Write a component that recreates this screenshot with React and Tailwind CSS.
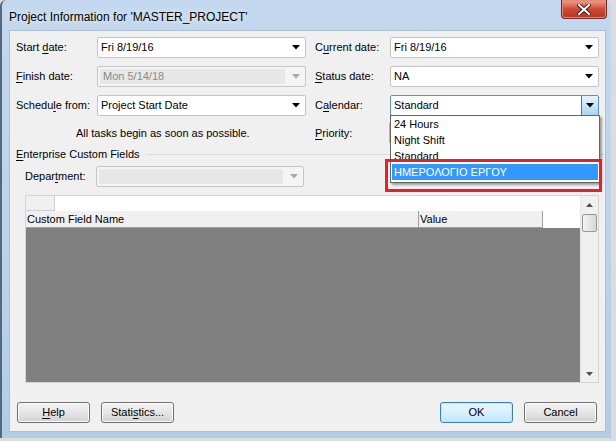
import clsx from "clsx";

const font = { fontFamily: '"Liberation Sans", Arial, sans-serif' };

function U({ children }) {
  return <span className="underline underline-offset-[2px]">{children}</span>;
}

function Arrow({ color = "#000" }) {
  return (
    <svg width="8" height="5" viewBox="0 0 8 5">
      <path d="M0 0h8L4 4.5z" fill={color} />
    </svg>
  );
}

function Combo({ value, disabled, focused, width = "w-[209px]" }) {
  return (
    <div
      className={clsx(
        "flex h-[21px] items-stretch rounded-[2px] border",
        width,
        disabled
          ? "border-[#c5c5c5] bg-[#f4f4f4]"
          : focused
          ? "border-[#5b8fbd] bg-white"
          : "border-[#c4c4c4] bg-white"
      )}
    >
      <div
        className={clsx(
          "flex flex-1 items-center px-[3px]",
          disabled && "m-[2px] bg-[#e7e7e7] text-[#8a8a8a]"
        )}
      >
        {value}
      </div>
      {focused ? (
        <div className="flex w-[17px] items-center justify-center border-l border-[#3c7fb1] bg-gradient-to-b from-[#e6f4fc] via-[#c9e6f7] to-[#a7d4f1]">
          <Arrow />
        </div>
      ) : (
        <div className="flex w-[18px] items-center justify-center">
          <Arrow color={disabled ? "#a8a8a8" : "#000"} />
        </div>
      )}
    </div>
  );
}

function Button({ children, focused, className }) {
  return (
    <button
      type="button"
      className={clsx(
        "flex h-[21px] w-[73px] items-center justify-center rounded-[3px] border text-[11px] text-black",
        focused
          ? "border-[#3c7fb1] bg-gradient-to-b from-[#eaf6fd] via-[#d9f0fc] to-[#bee6fd] shadow-[inset_0_0_0_1px_#c4e5f6]"
          : "border-[#707070] bg-gradient-to-b from-[#f2f2f2] via-[#e6e6e6] to-[#d2d2d2] shadow-[inset_0_0_0_1px_#fcfcfc]",
        className
      )}
    >
      {children}
    </button>
  );
}

export default function App() {
  return (
    <div className="h-[441px] w-[616px] overflow-hidden bg-[#dcdcdc]" style={font}>
      <div className="flex h-[438px] w-[611px] flex-col rounded-t-[6px] border-l-2 border-[#56687c] bg-gradient-to-b from-[#c3d8ee] via-[#bcd3eb] to-[#b3cce6]">
        {/* title bar */}
        <div className="flex h-[30px] items-start justify-between">
          <div className="pl-[7px] pt-[8px] text-[12px] text-black [text-shadow:0_0_6px_#ffffff]">
            Project Information for 'MASTER_PROJECT'
          </div>
          <div className="mr-[4px] flex h-[19px] w-[46px] items-center justify-center rounded-b-[4px] border border-t-0 border-[#6b2a22] bg-gradient-to-b from-[#e9a493] via-[#cf4a34] to-[#b9351f] shadow-[inset_0_0_0_1px_#e58a7a]">
            <svg width="14" height="11" viewBox="0 0 14 11">
              <path d="M2 1l10 9M12 1L2 10" stroke="#4a1a14" strokeWidth="4" strokeLinecap="square" />
              <path d="M2 1l10 9M12 1L2 10" stroke="#fff" strokeWidth="2" strokeLinecap="square" />
            </svg>
          </div>
        </div>

        {/* client area */}
        <div className="relative ml-[7px] h-[402px] w-[597px] border border-[#aebfd1] bg-[#f0f0f0] pl-[6px] pt-[6px] text-[11px] text-black">
          <div className="flex">
            <div className="flex w-[299px] flex-col gap-[8px]">
              <div className="flex items-center">
                <div className="w-[81px]">Start <U>d</U>ate:</div>
                <Combo value="Fri 8/19/16" />
              </div>
              <div className="flex items-center">
                <div className="w-[81px]"><U>F</U>inish date:</div>
                <Combo value="Mon 5/14/18" disabled />
              </div>
              <div className="flex items-center">
                <div className="w-[81px]">Schedu<U>l</U>e from:</div>
                <Combo value="Project Start Date" />
              </div>
            </div>
            <div className="flex flex-col gap-[8px]">
              <div className="flex items-center">
                <div className="w-[75px]">C<U>u</U>rrent date:</div>
                <Combo value="Fri 8/19/16" />
              </div>
              <div className="flex items-center">
                <div className="w-[75px]"><U>S</U>tatus date:</div>
                <Combo value="NA" />
              </div>
              <div className="flex items-center">
                <div className="w-[75px]">C<U>a</U>lendar:</div>
                <Combo value="Standard" focused />
              </div>
            </div>
          </div>

          <div className="mt-[9px] flex h-[16px] items-center">
            <div className="w-[299px] pl-[60px]">All tasks begin as soon as possible.</div>
            <div className="flex items-center">
              <div className="w-[74px]"><U>P</U>riority:</div>
              <div className="h-[20px] w-[60px] border border-[#b5b5b5] bg-white" />
            </div>
          </div>

          <div className="mt-[5px] flex h-[16px] items-center gap-[6px]">
            <div><U>E</U>nterprise Custom Fields</div>
            <div className="h-px flex-1 bg-[#d5dfe5]" />
          </div>

          <div className="mt-[4px] flex items-center pl-[9px]">
            <div className="w-[71px]">Depar<U>t</U>ment:</div>
            <Combo value="" disabled width="w-[208px]" />
          </div>

          {/* custom field grid */}
          <div className="ml-[9px] mt-[8px] flex h-[188px] w-[574px] border border-[#d4d4d4] bg-white">
            <div className="flex flex-1 flex-col">
              <div className="flex h-[15px]">
                <div className="w-[29px] border-r border-b border-[#d0d0d0] bg-[#f0f0f0]" />
              </div>
              <div className="flex h-[17px] items-stretch">
                <div className="flex w-[393px] items-center border-b border-r border-[#a0a0a0] bg-[#f0f0f0] pl-[1px]">
                  Custom Field Name
                </div>
                <div className="flex w-[124px] items-center border-b border-r border-[#a0a0a0] bg-[#f0f0f0] pl-[1px]">
                  Value
                </div>
              </div>
              <div className="flex-1 bg-[#808080]" />
            </div>
            <div className="flex w-[18px] flex-col items-center border-l border-[#e6e6e6] bg-[#f0f0f0]">
              <div className="flex h-[18px] items-center justify-center">
                <svg width="7" height="4" viewBox="0 0 7 4"><path d="M0 4h7L3.5 0z" fill="#505050" /></svg>
              </div>
              <div className="h-[18px] w-[15px] rounded-[2px] border border-[#979797] bg-gradient-to-r from-[#f3f3f3] to-[#d8d8d8]" />
              <div className="flex-1" />
              <div className="flex h-[17px] items-center justify-center">
                <svg width="7" height="4" viewBox="0 0 7 4"><path d="M0 0h7L3.5 4z" fill="#505050" /></svg>
              </div>
            </div>
          </div>

          <div className="mt-[19px] flex pl-[1px]">
            <Button><U>H</U>elp</Button>
            <Button className="ml-[11px]">Stati<U>s</U>tics...</Button>
            <div className="flex-1" />
            <Button focused>OK</Button>
            <Button className="ml-[11px] mr-[8px]">Cancel</Button>
          </div>

          {/* open calendar list */}
          <div className="absolute left-[380px] top-[84px] flex h-[68px] w-[210px] flex-col border border-[#646464] bg-white px-[1px] shadow-[2px_2px_2px_rgba(0,0,0,0.35)]">
            <div className="flex h-[16px] items-center px-[2px]">24 Hours</div>
            <div className="flex h-[16px] items-center px-[2px]">Night Shift</div>
            <div className="flex h-[16px] items-center px-[2px]">Standard</div>
            <div className="flex h-[16px] items-center bg-[#3399ff] px-[2px] text-white">ΗΜΕΡΟΛΟΓΙΟ ΕΡΓΟΥ</div>
          </div>
          <div className="absolute left-[375px] top-[128px] h-[33px] w-[217px] border-[3px] border-[#e3202b]" />
        </div>
      </div>
    </div>
  );
}
